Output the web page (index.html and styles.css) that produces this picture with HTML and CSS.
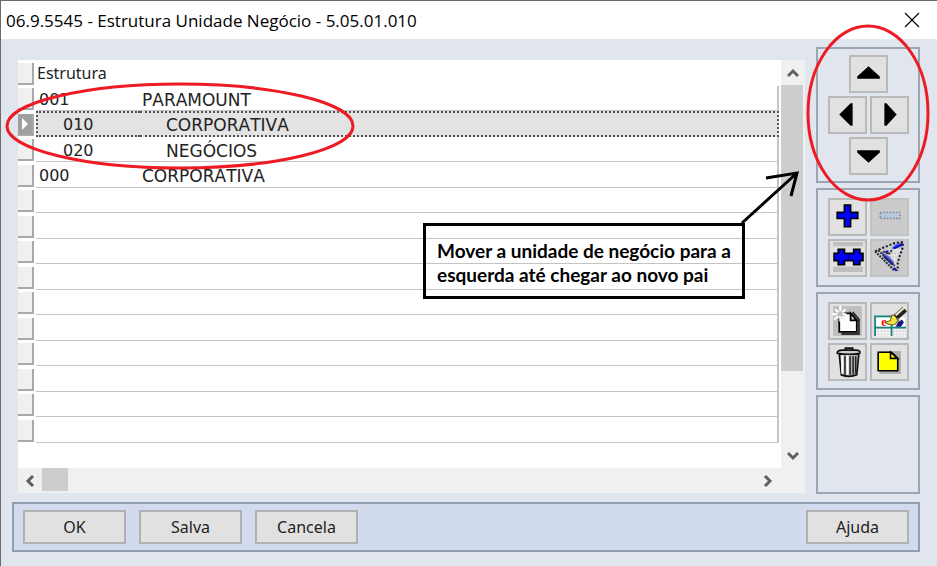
FILE: index.html
```html
<!DOCTYPE html>
<html lang="pt-BR">
<head>
    <meta charset="UTF-8">
    <meta name="viewport" content="width=device-width, initial-scale=1.0">
    <title>Estrutura Unidade Negócio</title>
    <link rel="stylesheet" href="styles.css">
</head>
<body>
    <div class="window">
        <header class="title-bar">
            <h1>06.9.5545 - Estrutura Unidade Negócio - 5.05.01.010</h1>
            <button class="close" aria-label="Fechar">
                <svg width="16" height="16" viewBox="0 0 16 16"><path d="M1 1L15 15M15 1L1 15" stroke="#000" stroke-width="1.2"/></svg>
            </button>
        </header>

        <main class="content">
            <section class="grid-panel">
                <div class="grid-body">
                    <table class="tree">
                        <thead>
                            <tr><th class="marker"><span></span></th><th class="heading" colspan="2">Estrutura</th></tr>
                        </thead>
                        <tbody>
                            <tr><td class="marker"><span></span></td><td class="code">001</td><td class="name">PARAMOUNT</td></tr>
                            <tr class="selected"><td class="marker"><span><svg width="8" height="12" viewBox="0 0 8 12"><path d="M1 0L7 6L1 12Z" fill="#fff"/></svg></span></td><td class="code child">010</td><td class="name child">CORPORATIVA</td></tr>
                            <tr><td class="marker"><span></span></td><td class="code child">020</td><td class="name child">NEGÓCIOS</td></tr>
                            <tr><td class="marker"><span></span></td><td class="code">000</td><td class="name">CORPORATIVA</td></tr>
                            <tr><td class="marker"><span></span></td><td class="code"></td><td class="name"></td></tr>
                            <tr><td class="marker"><span></span></td><td class="code"></td><td class="name"></td></tr>
                            <tr><td class="marker"><span></span></td><td class="code"></td><td class="name"></td></tr>
                            <tr><td class="marker"><span></span></td><td class="code"></td><td class="name"></td></tr>
                            <tr><td class="marker"><span></span></td><td class="code"></td><td class="name"></td></tr>
                            <tr><td class="marker"><span></span></td><td class="code"></td><td class="name"></td></tr>
                            <tr><td class="marker"><span></span></td><td class="code"></td><td class="name"></td></tr>
                            <tr><td class="marker"><span></span></td><td class="code"></td><td class="name"></td></tr>
                            <tr><td class="marker"><span></span></td><td class="code"></td><td class="name"></td></tr>
                            <tr><td class="marker"><span></span></td><td class="code"></td><td class="name"></td></tr>
                        </tbody>
                    </table>
                    <div class="scroll-v">
                        <button aria-label="Rolar para cima"><svg width="12" height="12" viewBox="0 0 12 12"><path d="M1 9L6 4L11 9"/></svg></button>
                        <div class="thumb"></div>
                        <button aria-label="Rolar para baixo"><svg width="12" height="12" viewBox="0 0 12 12"><path d="M1 3L6 8L11 3"/></svg></button>
                    </div>
                </div>
                <div class="scroll-h">
                    <button aria-label="Rolar para a esquerda"><svg width="12" height="12" viewBox="0 0 12 12"><path d="M9 1L4 6L9 11"/></svg></button>
                    <div class="thumb"></div>
                    <button aria-label="Rolar para a direita"><svg width="12" height="12" viewBox="0 0 12 12"><path d="M4 1L9 6L4 11"/></svg></button>
                </div>

                <!-- marks the rows being moved -->
                <svg class="ring-rows" width="350" height="88" viewBox="0 0 350 88"><ellipse cx="175" cy="44" rx="173" ry="42"/></svg>

                <p class="callout">Mover a unidade de negócio para a esquerda até chegar ao novo pai</p>
                <svg class="callout-arrow" width="60" height="56" viewBox="0 0 60 56"><path d="M2 53L57 3M26 8L57 3L51 26"/></svg>
            </section>

            <aside class="tools">
                <div class="group arrows">
                    <button class="tool" aria-label="Mover para cima"><svg viewBox="2 2 34 33"><path d="M8 23V21L19 11L30 21V23Z"/></svg></button>
                    <div class="pair">
                        <button class="tool" aria-label="Mover para a esquerda"><svg viewBox="2 2 34 33"><path d="M24 7V29H22L11 18L22 7Z"/></svg></button>
                        <button class="tool" aria-label="Mover para a direita"><svg viewBox="2 2 34 33"><path d="M14 7V29H16L26 18L16 7Z"/></svg></button>
                    </div>
                    <button class="tool" aria-label="Mover para baixo"><svg viewBox="2 2 34 33"><path d="M8 13V15L19 25L30 15V13Z"/></svg></button>
                    <svg class="ring-arrows" width="124" height="180" viewBox="0 0 124 180"><ellipse cx="62" cy="90" rx="60" ry="87"/></svg>
                </div>

                <div class="group">
                    <div class="pair">
                        <button class="tool" aria-label="Incluir">
                            <svg viewBox="2 2 34 33"><path d="M16 7H22V14H29V20H22V28H16V20H9V14H16Z" fill="#00f" stroke="#000" stroke-width="1.6"/></svg>
                        </button>
                        <button class="tool" aria-label="Excluir" disabled>
                            <svg viewBox="2 2 34 33"><rect x="10" y="14" width="19" height="6" fill="#b3c7dd" stroke="#858585" stroke-width="1.4" stroke-dasharray="1.5 1.5"/></svg>
                        </button>
                    </div>
                    <div class="pair">
                        <button class="tool" aria-label="Incluir vários">
                            <svg viewBox="2 2 34 33"><path d="M5 3H34V7H5ZM5 27H34V32H5Z" fill="#bfbfbf"/><path d="M10 10H16V14H25V10H31V14H34V21H31V25H25V21H16V25H10V21H6V14H10Z" fill="#00f" stroke="#000" stroke-width="1.7"/><path d="M20 14V21" stroke="#000080" stroke-width="1.5"/></svg>
                        </button>
                        <button class="tool" aria-label="Filtrar" disabled>
                            <svg viewBox="2 2 34 33">
                                <path d="M13 13L24 9L30 10L28 18L25 25L18 20Z" fill="#e2e2e2"/>
                                <path d="M11 12L15 15L19 17L23 22L24 27L18 22L13 18ZM21 9L25 5L32 3L31 7L24 10Z" fill="#5a66ee"/>
                                <path d="M15 13L18 12M23 9L32 5M14 17L22 25M23 28L26 31" stroke="#0a0ac8" stroke-width="2"/>
                                <path d="M5 12L14 8L24 4L32 3L32 8L29 16L27 23L27 31" fill="none" stroke="#1c1c1c" stroke-width="2" stroke-dasharray="2 1.8"/>
                                <path d="M5 12L24 31M8 11L24 26M13 12L18 15L22 10" fill="none" stroke="#333" stroke-width="2" stroke-dasharray="2 1"/>
                                <path d="M19 17L28 18M21 14L28 14M22 21L26 22" stroke="#b5b5b5" stroke-dasharray="1.5 1.5"/>
                            </svg>
                        </button>
                    </div>
                </div>

                <div class="group">
                    <div class="pair">
                        <button class="tool" aria-label="Novo">
                            <svg viewBox="2 2 34 33">
                                <rect x="5" y="4" width="28" height="29" fill="#bebebe"/>
                                <path d="M13 31H30V17L24 10" fill="none" stroke="#333" stroke-width="2"/>
                                <path d="M11 11H22L28 18V29H11Z" fill="#fff" stroke="#000" stroke-width="1.7"/>
                                <path d="M22 11V18H28Z" fill="#c8c8c8" stroke="#000" stroke-width="1.7"/>
                                <path d="M7 7H16V16H7Z" fill="#bebebe"/>
                                <path d="M12 4V9M12 14V19M4 12H9M14 12H18M7 7L10 10M17 7L14 10M6 17L10 14M14 14L16 16" stroke="#fff" stroke-width="2"/>
                            </svg>
                        </button>
                        <button class="tool" aria-label="Editar">
                            <svg viewBox="2 2 34 33">
                                <path d="M5 15H34V24H5Z" fill="#fff"/>
                                <path d="M6 27H34M6 30H34M6 33H34" stroke="#fff" stroke-width="1.6" stroke-dasharray="1.5 1.5"/>
                                <path d="M4 14H22M5 14V33M4 25H35M21 14V33" fill="none" stroke="#128484" stroke-width="1.7"/>
                                <text x="11" y="23" fill="#f00" font-family="Liberation Serif, serif" font-size="12" font-weight="bold">e</text>
                                <path d="M27 20L31 17L33 20L30 24H25Z" fill="#15157a"/>
                                <path d="M15 20Q18 23 24 22L28 18L25 13H21L20 18Z" fill="#f0e23a" stroke="#6a6420" stroke-width="1"/>
                                <path d="M25 15L34 7" stroke="#222" stroke-width="6"/>
                                <path d="M25 13L34 5" stroke="#f3edc4" stroke-width="2"/>
                                <path d="M26 16L28 18" stroke="#777" stroke-width="2"/>
                            </svg>
                        </button>
                    </div>
                    <div class="pair">
                        <button class="tool" aria-label="Excluir registro">
                            <svg viewBox="2 2 34 33">
                                <path d="M11 11H30L28 31Q21 34 13 31Z" fill="#aaa" stroke="#111" stroke-width="1.6"/>
                                <path d="M14 12V30M19 12V31" stroke="#fff" stroke-width="2.2"/>
                                <path d="M16.500 13V31M21.500 13V31M24.500 13V31M27 13V30" stroke="#222" stroke-width="1.4"/>
                                <path d="M9 10Q9 7 14 7H27Q32 7 31 10Q21 12 9 10Z" fill="#ccc" stroke="#111" stroke-width="1.6"/>
                                <path d="M17 7V5H24V7" fill="none" stroke="#111" stroke-width="1.7"/>
                            </svg>
                        </button>
                        <button class="tool" aria-label="Anotação">
                            <svg viewBox="2 2 34 33">
                                <path d="M9 8H30V30H9Z" fill="#ababab"/>
                                <path d="M8 9H21L27 15V27H8Z" fill="#ff0" stroke="#000" stroke-width="1.6"/>
                                <path d="M20 9V15H27Z" fill="#ff0" stroke="#000" stroke-width="1.6"/>
                            </svg>
                        </button>
                    </div>
                </div>

                <div class="group"></div>
            </aside>
        </main>

        <footer class="actions">
            <button>OK</button>
            <button>Salva</button>
            <button>Cancela</button>
            <button class="help">Ajuda</button>
        </footer>
    </div>
</body>
</html>
```

FILE: styles.css
```css
* {
    margin: 0;
    padding: 0;
    box-sizing: border-box;
}

body {
    background: #e1e5ee;
    color: #222;
    font-family: "Noto Sans", sans-serif;
    font-size: 16px;
}

button {
    font: inherit;
    color: inherit;
}

.window {
    min-height: 100vh;
    display: flex;
    flex-direction: column;
    border-top: 1px solid #6b6b6b;
    border-left: 1px solid #6b6b6b;
}

/* Title bar */
.title-bar {
    height: 38px;
    padding: 0 16px 0 5px;
    display: flex;
    align-items: center;
    justify-content: space-between;
    background: #fff;
    color: #000;
}

.title-bar h1 {
    font-family: "Open Sans", sans-serif;
    font-size: 17px;
    font-weight: normal;
}

.close {
    width: 18px;
    height: 18px;
    border: none;
    background: none;
}

.close svg {
    display: block;
    margin: 0 auto;
}

.content {
    display: flex;
    gap: 11px;
    padding: 8px 17px;
}

/* Structure grid */
.grid-panel {
    position: relative;
    flex: 1;
    min-width: 0;
    margin-top: 13px;
}

.grid-body {
    display: flex;
    height: 408px;
    background: #fff;
}

.tree {
    flex: 1;
    align-self: flex-start;
    border-collapse: separate;
    border-spacing: 0;
    table-layout: fixed;
    line-height: 20px;
    text-align: left;
}

.tree tr {
    height: 26px;
}

.tree tbody tr:nth-child(odd) {
    height: 25px;
}

.tree .marker {
    width: 18px;
    height: inherit;
    padding: 2px 2px 1px 0;
}

.marker span {
    display: flex;
    align-items: center;
    justify-content: center;
    height: 22px;
    background: #f0f0f0;
    border-right: 2px solid #a9a9a9;
    border-bottom: 2px solid #a9a9a9;
}

.tree .heading {
    font-weight: normal;
    padding-left: 1px;
}

.tree .code,
.tree .name {
    padding-top: 3px;
    border-bottom: 1px solid #c4c4c4;
    font-family: "DejaVu Sans", sans-serif;
    font-kerning: none;
}

.tree .code {
    width: 104px;
    padding-left: 3px;
}

.tree .code.child {
    padding-left: 27px;
}

.tree .name {
    padding-left: 2px;
    border-right: 2px solid #c4c4c4;
    font-size: 17px;
}

.tree .name.child {
    padding-left: 26px;
}

.tree .selected .code,
.tree .selected .name {
    padding-top: 2px;
    background: #e3e3e3;
    border-top: 2px dotted #555;
    border-bottom: 2px dotted #555;
}

.tree .selected .code {
    border-left: 2px dotted #555;
    padding-left: 25px;
}

.tree .selected .name {
    border-right: 2px dotted #555;
}

.selected .marker span {
    background: #a0a0a0;
}

/* Scroll bars */
.scroll-v,
.scroll-h {
    display: flex;
    background: #f0f0f0;
}

.scroll-v {
    flex-direction: column;
    justify-content: space-between;
    width: 24px;
    margin-left: 2px;
}

.scroll-v button,
.scroll-h button {
    display: flex;
    align-items: center;
    justify-content: center;
    width: 24px;
    height: 25px;
    border: none;
    background: none;
}

.scroll-v path,
.scroll-h path {
    fill: none;
    stroke: #606060;
    stroke-width: 3;
}

.thumb {
    background: #cdcdcd;
}

.scroll-v .thumb {
    width: 22px;
    height: 286px;
    margin-bottom: auto;
}

.scroll-h {
    height: 25px;
    padding-right: 26px;
}

.scroll-h .thumb {
    width: 26px;
    height: 23px;
    margin-right: auto;
}

/* Tool column */
.tools {
    width: 104px;
    display: grid;
    grid-template-rows: 136px 99px 98px 99px;
    gap: 5px;
}

.group {
    position: relative;
    display: flex;
    flex-direction: column;
    align-items: center;
    justify-content: center;
    gap: 3px;
    border: 2px solid #9ba6b5;
}

.pair {
    display: flex;
    gap: 3px;
}

.tool {
    width: 39px;
    height: 38px;
    border: 2px solid #b9b9b9;
    background: #e1e1e1;
}

.tool:disabled {
    background: #cbcbcb;
    border-color: #c2c2c2;
}

.tool svg {
    display: block;
    width: 100%;
    height: 100%;
}

/* Bottom bar */
.actions {
    display: flex;
    gap: 13px;
    margin: 0 17px 14px 11px;
    padding: 6px 9px;
    border: 2px solid #929db0;
    background: #d2daed;
}

.actions button {
    width: 103px;
    height: 34px;
    border: 2px solid #b1b1b1;
    background: #e1e1e1;
}

.actions .help {
    margin-left: auto;
}

/* Notes laid over the window */
.ring-rows,
.ring-arrows,
.callout,
.callout-arrow {
    position: absolute;
    pointer-events: none;
}

.ring-rows,
.ring-arrows {
    fill: none;
    stroke: #ed1c24;
    stroke-width: 3;
}

.ring-rows {
    left: -13px;
    top: 22px;
}

.ring-arrows {
    left: -12px;
    top: -26px;
    z-index: 1;
}

.callout {
    right: 60px;
    top: 163px;
    width: 322px;
    padding: 13px 0 9px 11px;
    border: 3px solid #000;
    color: #000;
    font-family: Lato, sans-serif;
    font-size: 19px;
    font-weight: bold;
    line-height: 24px;
}

.callout-arrow {
    right: 5px;
    top: 110px;
    fill: none;
    stroke: #000;
    stroke-width: 3;
}
```
